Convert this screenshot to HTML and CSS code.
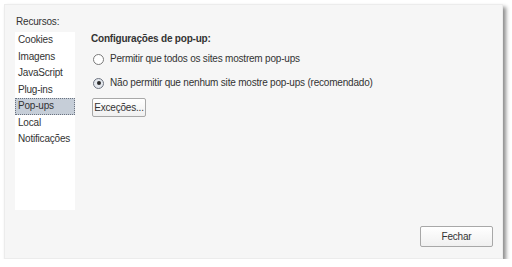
FILE: index.html
```html
<!DOCTYPE html>
<html lang="pt">
<head>
<meta charset="utf-8">
<title>Configurações de conteúdo</title>
<link rel="stylesheet" href="styles.css">
</head>
<body>
<div class="window">
  <div class="main">
    <div class="label">Recursos:</div>
    <div class="spacer"></div>
    <ul class="list">
      <li>Cookies</li>
      <li>Imagens</li>
      <li>JavaScript</li>
      <li>Plug-ins</li>
      <li class="selected">Pop-ups</li>
      <li>Local</li>
      <li>Notificações</li>
    </ul>
    <div class="content">
      <div class="title">Configurações de pop-up:</div>
      <label class="radio"><span class="dot"></span>Permitir que todos os sites mostrem pop-ups</label>
      <label class="radio"><span class="dot checked"></span>Não permitir que nenhum site mostre pop-ups (recomendado)</label>
      <button class="btn small">Exceções...</button>
    </div>
  </div>
  <div class="footer">
    <button class="btn close">Fechar</button>
  </div>
</div>
</body>
</html>
```
FILE: styles.css
```css
html, body {
  margin: 0;
  background: #ffffff;
}
body {
  font-family: "Liberation Sans", Arial, sans-serif;
  font-size: 10px;
  letter-spacing: -0.2px;
  color: #333333;
}
.window {
  margin: 4px 0 0 4px;
  width: 499px;
  height: 255px;
  box-sizing: border-box;
  background: #f6f6f6;
  border: 1px solid #ececec;
  box-shadow: 3px 3px 4px rgba(0, 0, 0, 0.45);
  padding: 10px 9px 11px 10px;
  display: flex;
  flex-direction: column;
}
.main {
  display: grid;
  grid-template-columns: 60px 1fr;
  grid-template-rows: 17px auto;
  column-gap: 16px;
  flex: 1;
}
.label {
  line-height: 12px;
  padding-top: 1px;
  padding-left: 1px;
}
.list {
  list-style: none;
  margin: 0;
  padding: 0;
  background: #ffffff;
  height: 178px;
}
.list li {
  height: 16.5px;
  line-height: 16.5px;
  padding-left: 3px;
  box-sizing: border-box;
}
.list li.selected {
  background: #c6ced8;
  outline: 1px dotted #6b7380;
  outline-offset: -1px;
}
.content {
  display: flex;
  flex-direction: column;
  align-items: flex-start;
}
.title {
  font-weight: bold;
  line-height: 12px;
  margin-top: 1px;
}
.radio {
  display: flex;
  align-items: center;
  line-height: 12px;
  margin-top: 8px;
}
.radio + .radio {
  margin-top: 12px;
}
.dot {
  width: 11px;
  height: 11px;
  box-sizing: border-box;
  border: 1px solid #7a7a7a;
  border-radius: 50%;
  background: #ffffff;
  margin: 0 6px 0 2px;
  position: relative;
}
.dot.checked {
  background: #e4e8ee;
  border-color: #6e7480;
}
.dot.checked::after {
  content: "";
  position: absolute;
  left: 2.5px;
  top: 2.5px;
  width: 4px;
  height: 4px;
  border-radius: 50%;
  background: #2b2b2b;
}
.btn {
  font-family: inherit;
  font-size: 10px;
  letter-spacing: -0.2px;
  color: #333333;
  background: linear-gradient(#ffffff, #f0f0f0);
  border: 1px solid #a8a8a8;
  border-radius: 2px;
  padding: 0;
}
.btn.small {
  margin-top: 9px;
  margin-left: 1px;
  width: 54px;
  height: 19px;
}
.footer {
  display: flex;
  justify-content: flex-end;
}
.btn.close {
  width: 73px;
  height: 21px;
}
```
